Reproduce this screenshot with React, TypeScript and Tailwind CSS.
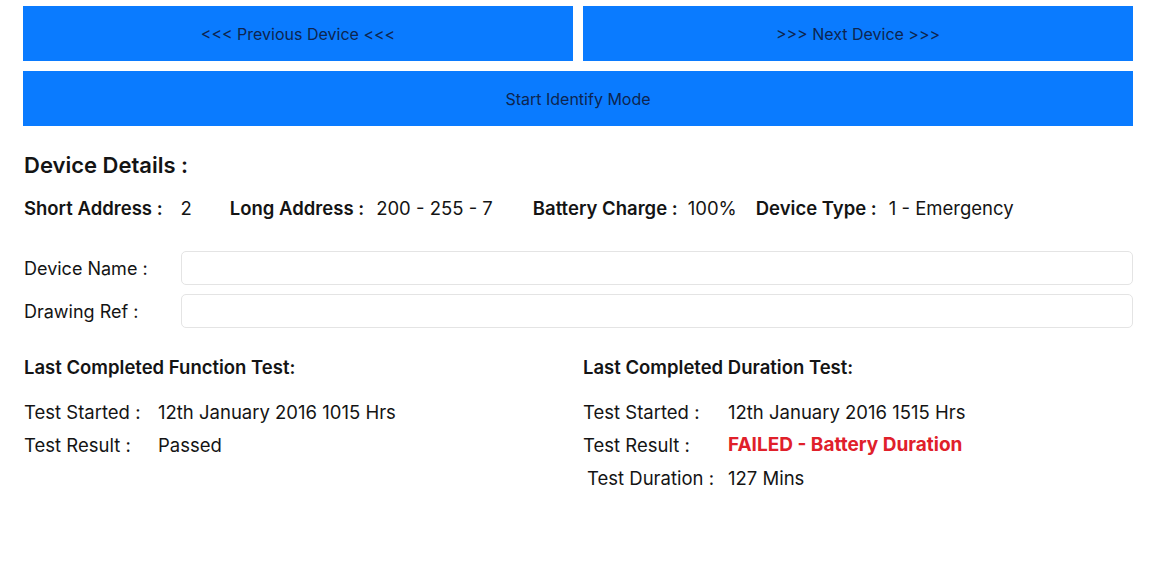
import React from "react";

export default function App() {
  const font = { fontFamily: "Inter, 'Noto Sans', sans-serif" };
  return (
    <div className="w-[1156px] h-[577px] bg-white text-[#141414] overflow-hidden" style={font}>
      <div className="pl-[23px] pr-[23px] pt-[6px]">
        <div className="grid grid-cols-2 gap-[10px]">
          <button className="h-[55px] pt-[1px] bg-[#0a7bff] text-[#0d2550] text-[16px]">&lt;&lt;&lt; Previous Device &lt;&lt;&lt;</button>
          <button className="h-[55px] pt-[1px] bg-[#0a7bff] text-[#0d2550] text-[16px]">&gt;&gt;&gt; Next Device &gt;&gt;&gt;</button>
        </div>
        <button className="mt-[10px] w-full h-[55px] pt-[1px] bg-[#0a7bff] text-[#0d2550] text-[16px]">Start Identify Mode</button>

        <div className="mt-[26px] pl-[1px] text-[22px] font-semibold leading-[26px]">Device Details :</div>

        <div className="mt-[18px] pl-[1px] flex items-center text-[18.5px] leading-[24px]">
          <span className="font-semibold">Short Address :</span>
          <span className="ml-[18px]">2</span>
          <span className="ml-[38px] font-semibold">Long Address :</span>
          <span className="ml-[12px]">200 - 255 - 7</span>
          <span className="ml-[40px] font-semibold">Battery Charge :</span>
          <span className="ml-[10px]">100%</span>
          <span className="ml-[19px] font-semibold">Device Type :</span>
          <span className="ml-[12px]">1 - Emergency</span>
        </div>

        <div className="mt-[31px] flex flex-col gap-[9px] text-[18px]">
          <div className="flex items-center">
            <span className="w-[158px] pl-[1px]">Device Name :</span>
            <div className="flex-1 h-[34px] rounded-[5px] border border-[#e4e4e4] bg-white" />
          </div>
          <div className="flex items-center">
            <span className="w-[158px] pl-[1px]">Drawing Ref :</span>
            <div className="flex-1 h-[34px] rounded-[5px] border border-[#e4e4e4] bg-white" />
          </div>
        </div>

        <div className="mt-[27px] grid grid-cols-2 gap-[10px] text-[18.5px]">
          <div className="pl-[1px]">
            <div className="font-semibold leading-[24px]">Last Completed Function Test:</div>
            <div className="mt-[21px] flex flex-col gap-[9px] leading-[24px]">
              <div className="flex"><span className="w-[134px]">Test Started :</span><span>12th January 2016 1015 Hrs</span></div>
              <div className="flex"><span className="w-[134px]">Test Result :</span><span>Passed</span></div>
            </div>
          </div>
          <div>
            <div className="font-semibold leading-[24px]">Last Completed Duration Test:</div>
            <div className="mt-[21px] flex flex-col gap-[9px] leading-[24px]">
              <div className="flex"><span className="w-[145px]">Test Started :</span><span>12th January 2016 1515 Hrs</span></div>
              <div className="flex"><span className="w-[145px]">Test Result :</span><span className="font-bold text-[19px] text-[#e0202a]">FAILED - Battery Duration</span></div>
              <div className="flex"><span className="w-[145px] pl-[4px]">Test Duration :</span><span>127 Mins</span></div>
            </div>
          </div>
        </div>
      </div>
    </div>
  );
}
